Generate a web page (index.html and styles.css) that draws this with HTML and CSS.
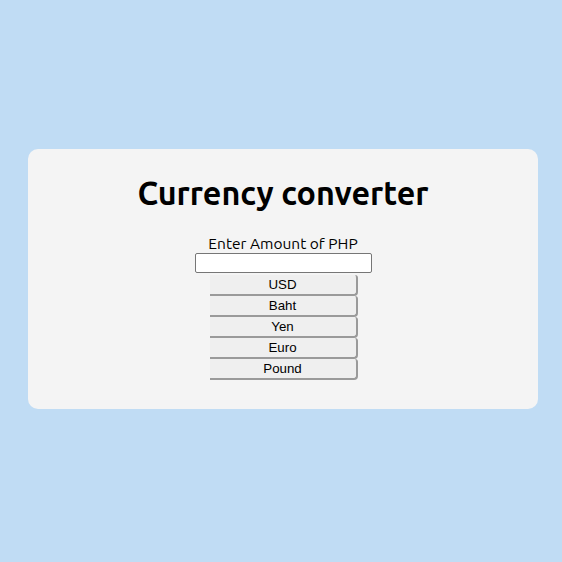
FILE: index.html
```html
<!DOCTYPE html>
<html>
<head>
<meta charset="utf-8">
<link rel="stylesheet" href="styles.css">
</head>
<body>
<div class="card">
  <h1 class="title">Currency converter</h1>
  <label class="label" for="amt">Enter Amount of PHP</label>
  <input class="amount" id="amt" type="text">
  <div class="buttons">
    <button class="btn">USD</button>
    <button class="btn">Baht</button>
    <button class="btn">Yen</button>
    <button class="btn">Euro</button>
    <button class="btn">Pound</button>
  </div>
</div>
</body>
</html>
```
FILE: styles.css
```css
html, body {
  margin: 0;
  padding: 0;
}
body {
  background: #c0dcf4;
  width: 562px;
  height: 562px;
  box-sizing: border-box;
  padding: 149px 24px 0 28px;
  font-family: "Ubuntu", "Open Sans", sans-serif;
}
.card {
  background: #f4f4f4;
  border-radius: 10px;
  height: 260px;
  display: flex;
  flex-direction: column;
  align-items: center;
  padding-top: 24px;
  box-sizing: border-box;
}
.title {
  margin: 0;
  font-size: 32.3px;
  font-weight: 700;
  line-height: 40px;
  color: #000;
}
.label {
  margin-top: 22px;
  font-size: 15.5px;
  line-height: 18px;
  color: #000;
}
.amount {
  margin: 0;
  width: 177px;
  height: 20px;
  box-sizing: border-box;
  border: 1px solid #767676;
  border-radius: 2px;
  background: #fff;
  padding: 1px 2px;
}
.buttons {
  display: flex;
  flex-direction: column;
  margin-top: 2px;
  padding-left: 1px;
}
.btn {
  width: 148px;
  height: 21px;
  box-sizing: border-box;
  margin: 0;
  padding: 0;
  background: #efefef;
  border: none;
  border-right: 2px solid #9a9a9a;
  border-bottom: 2px solid #9a9a9a;
  border-radius: 0 3px 4px 0;
  font-family: "Liberation Sans", Arial, sans-serif;
  font-size: 13.3px;
  color: #000;
  line-height: 19px;
}
```
